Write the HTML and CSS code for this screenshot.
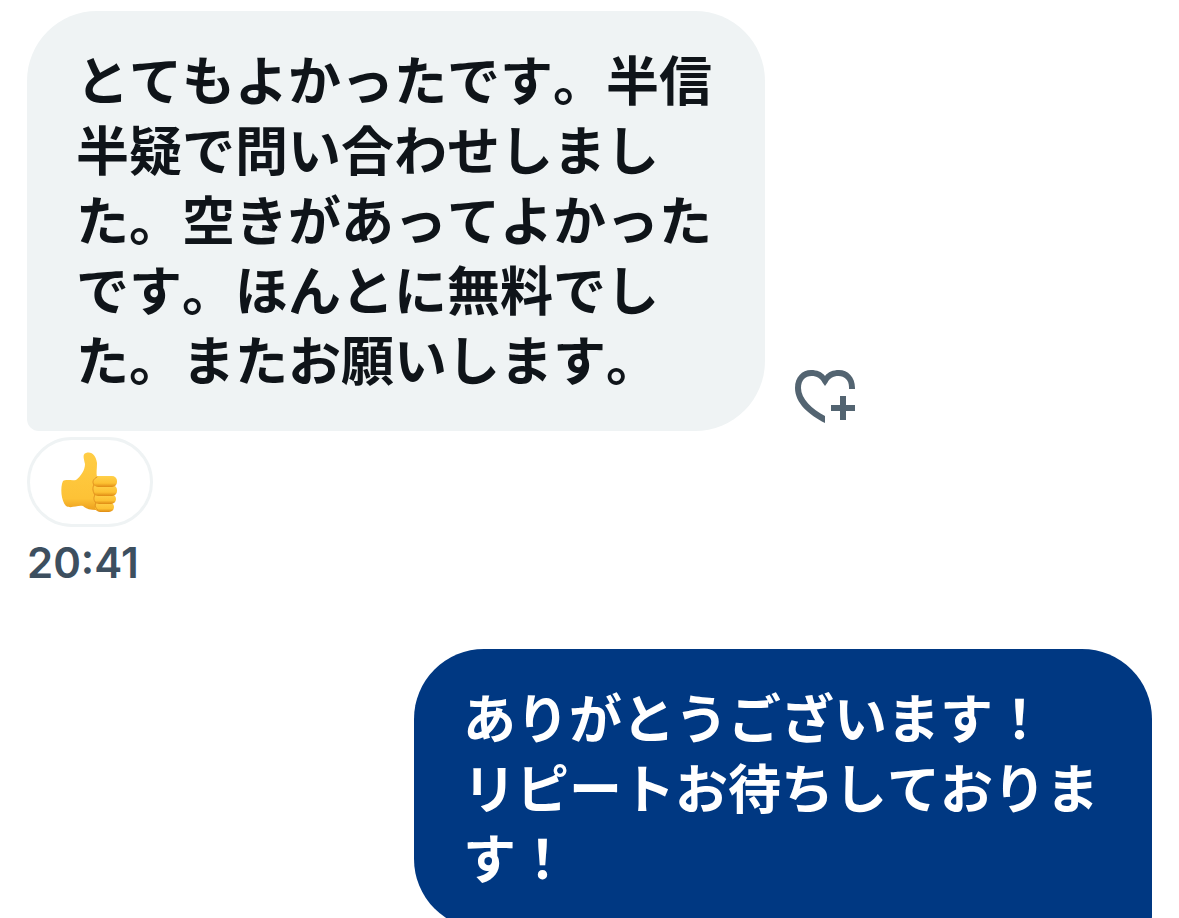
FILE: index.html
```html
<!DOCTYPE html>
<html lang="ja">
<head>
  <meta charset="UTF-8" />
  <meta name="viewport" content="width=device-width, initial-scale=1.0" />
  <title>メッセージ</title>
  <link rel="stylesheet" href="styles.css">
</head>
<body>

  <main class="chat">

    <!-- received -->
    <div class="message received">
      <div class="row">
        <p class="bubble">とてもよかったです。半信半疑で問い合わせしました。空きがあってよかったです。ほんとに無料でした。またお願いします。</p>
        <button class="react" aria-label="リアクションを追加">
          <svg width="66" height="60" viewBox="0 0 66 60" aria-hidden="true">
            <path fill="#536471" d="M33 56C17 48 3 36 3 21C3 10 10 3 19 3C25 3 30 5 33 9C36 5 41 3 47 3C56 3 63 10 63 21V22H57V20C57 13 52.500 9 46.500 9C41 9 37.500 11.500 35.500 15.500L33 19L30.500 15.500C28.500 11.500 25 9 19.500 9C13.500 9 9 13 9 21C9 32 20 42 33 49Z" />
            <path fill="#536471" d="M48 29h6v9h9v6h-9v9h-6v-9h-9v-6h9z" />
          </svg>
        </button>
      </div>
      <button class="reaction" aria-label="いいね">
        <svg width="60" height="62" viewBox="0 0 60 62" aria-hidden="true">
          <defs>
            <linearGradient id="skin" x1="0" y1="0" x2="0" y2="1">
              <stop offset="0" stop-color="#ffcd45" />
              <stop offset="0.8" stop-color="#fdc236" />
              <stop offset="1" stop-color="#ec9f1d" />
            </linearGradient>
            <linearGradient id="finger" x1="0" y1="0" x2="0" y2="1">
              <stop offset="0" stop-color="#ffd04a" />
              <stop offset="0.65" stop-color="#fdc132" />
              <stop offset="1" stop-color="#df8a14" />
            </linearGradient>
          </defs>
          <path fill="url(#skin)" d="M3 30C6 28 12 30 16 29C21 25 25 19 25 13C24 8 22 3 26 2C32 0 36 5 37 12C37 18 36 22 37 26L40 59C33 59 27 59 23 55C17 54 11 58 6 55C1 50 0 36 3 30Z" />
          <rect x="35" y="51" width="19" height="10" rx="5" fill="url(#finger)" />
          <rect x="34" y="43" width="22" height="10" rx="5" fill="url(#finger)" />
          <rect x="33" y="34" width="24" height="11" rx="5" fill="url(#finger)" />
          <rect x="33" y="25" width="24" height="11" rx="5" fill="url(#finger)" />
          <path fill="none" stroke="#e39320" stroke-width="1" stroke-linecap="round" d="M37 26C33 28 32 31 34 34C32 37 33 41 35 44C33 47 34 50 36 52C34 55 36 57 38 59" />
        </svg>
      </button>
      <time class="time">20:41</time>
    </div>

    <!-- sent -->
    <div class="message sent">
      <p class="bubble">ありがとうございます！<br>リピートお待ちしております！</p>
    </div>

  </main>

</body>
</html>
```
FILE: styles.css
```css
:root {
  --text: #0f1419;
  --gray: #eff3f4;
  --blue: #003882;
}

body {
  margin: 0;
  background: white;
  color: var(--text);
  font-family: Inter, "Noto Sans CJK JP", sans-serif;
}

.chat {
  display: flex;
  flex-direction: column;
  gap: 63px;
  padding: 11px 27px 0;
}

.message {
  display: flex;
  flex-direction: column;
  align-items: flex-start;
}

.sent {
  align-items: flex-end;
}

.row {
  display: flex;
  align-items: flex-end;
  gap: 27px;
}

.bubble {
  box-sizing: border-box;
  max-width: 738px;
  margin: 0;
  padding: 32px 49px 38px;
  font-family: "Noto Sans CJK JP", sans-serif;
  font-size: 53px;
  font-weight: 600;
  font-kerning: none;
  text-spacing-trim: space-all;
  line-height: 70px;
  line-break: strict;
}

.received .bubble {
  background: var(--gray);
  border-radius: 70px 70px 70px 12px;
}

.sent .bubble {
  background: var(--blue);
  color: white;
  border-radius: 70px 70px 12px 70px;
}

button {
  border: none;
  background: none;
  padding: 0;
  cursor: pointer;
}

svg {
  display: block;
}

.react {
  margin-bottom: 4px;
}

.reaction {
  display: flex;
  align-items: center;
  justify-content: center;
  box-sizing: border-box;
  width: 126px;
  height: 90px;
  margin-top: 6px;
  border: 3px solid var(--gray);
  border-radius: 45px;
}

.time {
  margin-top: 13px;
  color: #3d4f5f;
  font-size: 42px;
  font-weight: 600;
  line-height: 46px;
}
```
